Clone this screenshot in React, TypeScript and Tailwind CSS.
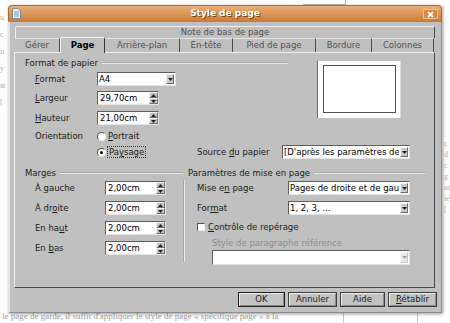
import type { ReactNode } from 'react'

const TABS = [
  { label: 'Gérer', w: 'w-[45px]' },
  { label: 'Page', w: 'w-[45px]', active: true },
  { label: 'Arrière-plan', w: 'w-[75px]' },
  { label: 'En-tête', w: 'w-[53px]' },
  { label: 'Pied de page', w: 'w-[83px]' },
  { label: 'Bordure', w: 'w-[56px]' },
  { label: 'Colonnes', w: 'w-[62px]' },
]

function Arrow({ up }: { up?: boolean }) {
  return (
    <svg width="5" height="3" viewBox="0 0 5 3" className="block">
      <path d={up ? 'M0 3 L2.5 0 L5 3 Z' : 'M0 0 L5 0 L2.5 3 Z'} fill="#222" />
    </svg>
  )
}

function Heading({ children, className = '' }: { children: ReactNode; className?: string }) {
  return (
    <div className={`flex h-[14px] items-center ${className}`}>
      <span className="whitespace-nowrap text-[8.5px] text-[#1c1c1c]">{children}</span>
      <div className="ml-[4px] h-[2px] flex-1 border-t border-t-[#a9a9a9] border-b border-b-[#ececec]" />
    </div>
  )
}

function Combo({ value, className = '', disabled }: { value: string; className?: string; disabled?: boolean }) {
  return (
    <div className={`flex border border-t-[#5e5e5e] border-l-[#5e5e5e] border-r-[#e4e4e4] border-b-[#e4e4e4] bg-white ${className}`}>
      <div className="flex flex-1 items-center overflow-hidden whitespace-nowrap pl-[1px] text-[8.5px] text-black">{value}</div>
      <div className={`m-[1px] flex w-[8px] items-center justify-center border border-t-[#f4f4f4] border-l-[#f4f4f4] border-r-[#6a6a6a] border-b-[#6a6a6a] bg-[#cacaca] ${disabled ? 'opacity-40' : ''}`}>
        <Arrow />
      </div>
    </div>
  )
}

function Spin({ value, className = '' }: { value: string; className?: string }) {
  return (
    <div className={`flex h-[14px] border border-t-[#5e5e5e] border-l-[#5e5e5e] border-r-[#e4e4e4] border-b-[#e4e4e4] bg-white ${className}`}>
      <div className="flex flex-1 items-center pl-[2px] text-[8.5px] text-black">{value}</div>
      <div className="flex w-[9px] flex-col bg-[#c6c6c6]">
        <div className="flex flex-1 items-center justify-center border border-t-[#f4f4f4] border-l-[#f4f4f4] border-r-[#707070] border-b-[#707070]">
          <Arrow up />
        </div>
        <div className="flex flex-1 items-center justify-center border border-t-[#f4f4f4] border-l-[#f4f4f4] border-r-[#707070] border-b-[#707070]">
          <Arrow />
        </div>
      </div>
    </div>
  )
}

function Radio({ checked }: { checked?: boolean }) {
  return (
    <div className="flex h-[9px] w-[9px] items-center justify-center rounded-full border border-t-[#555] border-l-[#555] border-r-[#eee] border-b-[#eee] bg-white">
      {checked && <div className="h-[3px] w-[3px] rounded-full bg-black" />}
    </div>
  )
}

// children wrapped in one span so spaces around <U> survive the flex box
function Label({ children, className = '' }: { children: ReactNode; className?: string }) {
  return (
    <div className={`flex items-center whitespace-nowrap text-[8.5px] text-[#1c1c1c] ${className}`}>
      <span>{children}</span>
    </div>
  )
}

function U({ children }: { children: ReactNode }) {
  return <span className="underline underline-offset-[1px]">{children}</span>
}

function Button({ children, className = '', primary }: { children: ReactNode; className?: string; primary?: boolean }) {
  return (
    <div className={`flex h-[15px] items-center justify-center border ${primary ? 'border-[#1e1e1e]' : 'border-[#3c3c3c]'} bg-[#c3c3c3] text-[8.5px] text-[#1c1c1c] ${className}`}>
      <div className="flex h-full w-full items-center justify-center border border-t-[#ececec] border-l-[#ececec] border-r-[#8a8a8a] border-b-[#8a8a8a]">
        <span>{children}</span>
      </div>
    </div>
  )
}

function BackgroundDoc() {
  return (
    <>
      <div className="absolute left-[303px] top-[4px] h-px w-[42px] bg-[#b8b8b8]" />
      <div className="absolute left-[345px] top-0 h-[5px] w-px bg-[#b8b8b8]" />
      <div className="absolute left-0 top-[14px] flex flex-col gap-[9px] font-['Liberation_Serif',serif] text-[8px] leading-none text-[#a8a8a8]">
        <span>u</span>
        <span>c</span>
        <span>ıı</span>
        <span>y</span>
        <span>st</span>
        <span>[</span>
      </div>
      <div className="absolute left-[444px] top-[140px] flex flex-col gap-[3px] font-['Liberation_Serif',serif] text-[8px] leading-none text-[#b0b0b0]">
        <span>c</span>
        <span>d</span>
        <span>c</span>
        <span>g</span>
        <span>ac</span>
        <span>ié</span>
        <span>[</span>
      </div>
      <div className="absolute left-[343px] top-[313px] h-[10px] w-px bg-[#c8c8c8]" />
      <div className="absolute left-[417px] top-[313px] h-[10px] w-px bg-[#c8c8c8]" />
      <div className="absolute left-[2px] top-[311px] whitespace-nowrap font-['Liberation_Serif',serif] text-[9px] leading-[11px] text-[#a0a0a0]">
        le page de garde, il suffit d'appliquer le style de page « spécifique page » à la
      </div>
    </>
  )
}

export default function App() {
  return (
    <div className="relative h-[323px] w-[450px] overflow-hidden bg-white font-['DejaVu_Sans',sans-serif]">
      <BackgroundDoc />

      {/* dialog window */}
      <div className="absolute left-[8px] top-[5px] flex h-[308px] w-[434px] flex-col shadow-[1px_1px_3px_rgba(0,0,0,0.4)]">
        {/* title bar */}
        <div className="relative flex h-[17px] items-center justify-center rounded-t-[4px] border border-b-0 border-[#b06c30] bg-linear-to-b from-[#eab077] to-[#c97a35]">
          <svg width="9" height="11" viewBox="0 0 9 11" className="absolute left-[3px] top-[2px]">
            <path d="M0.5 0.5 H6 L8.5 3 V10.5 H0.5 Z" fill="#e8eef2" stroke="#7b8a96" />
            <path d="M2 4 H7 M2 6 H7 M2 8 H7" stroke="#8a98a4" strokeWidth="1" />
          </svg>
          <span className="text-[9px] font-bold text-white [text-shadow:1px_1px_0_#7a4418]">Style de page</span>
          <div className="absolute right-[3px] top-[3px] flex h-[10px] w-[15px] items-center justify-center border border-[#f1c190] bg-[#d48848]">
            <svg width="7" height="7" viewBox="0 0 7 7">
              <path d="M1 1 L6 6 M6 1 L1 6" stroke="white" strokeWidth="1.8" />
            </svg>
          </div>
        </div>

        {/* body */}
        <div className="flex flex-1 flex-col border-l-2 border-l-[#e6e4e2] border-r border-r-[#8c8c8c] border-b border-b-[#8c8c8c] bg-[#c0c0c0] pl-[4px] pr-[6px] pt-[4px]">
          {/* tabs, first row */}
          <div className="ml-[1px] flex h-[12px] items-center justify-center rounded-t-[2px] border-t border-l border-t-[#ededed] border-l-[#ededed] border-r border-r-[#4a4a4a] text-[8.5px] text-[#505050]">
            Note de bas de page
          </div>
          {/* tabs, second row */}
          <div className="relative z-10 ml-[1px] flex h-[14px]">
            {TABS.map(t =>
              t.active ? (
                <div
                  key={t.label}
                  className={`${t.w} -mt-[1px] flex h-[16px] items-center justify-center rounded-t-[2px] border-t border-l border-t-[#f4f4f4] border-l-[#f4f4f4] border-r border-r-[#3a3a3a] bg-[#c0c0c0] text-[8.5px] font-bold text-black`}
                >
                  {t.label}
                </div>
              ) : (
                <div
                  key={t.label}
                  className={`${t.w} flex h-[14px] items-center justify-center border-t border-t-[#e6e6e6] border-r border-r-[#4a4a4a] text-[8.5px] text-[#505050]`}
                >
                  {t.label}
                </div>
              ),
            )}
          </div>

          {/* page panel */}
          <div className="flex h-[236px] flex-col border border-t-[#f0f0f0] border-l-[#f0f0f0] border-r-[#4a4a4a] border-b-[#4a4a4a] pl-[10px] pt-[3px]">
            {/* paper format */}
            <div className="flex">
              <div className="flex w-[263px] flex-col">
                <Heading>Format de papier</Heading>
                <div className="flex flex-col pl-[10px]">
                  <div className="mt-[2px] flex h-[14px]">
                    <Label className="w-[62px]"><U>F</U>ormat</Label>
                    <Combo value="A4" className="w-[79px]" />
                  </div>
                  <div className="mt-[5px] flex h-[14px]">
                    <Label className="w-[62px]"><U>L</U>argeur</Label>
                    <Spin value="29,70cm" className="w-[62px]" />
                  </div>
                  <div className="mt-[6px] flex h-[14px]">
                    <Label className="w-[62px]"><U>H</U>auteur</Label>
                    <Spin value="21,00cm" className="w-[62px]" />
                  </div>
                  <div className="mt-[4px] flex h-[14px] items-center">
                    <Label className="w-[62px]">Orientation</Label>
                    <Radio />
                    <Label className="ml-[2px]"><U>P</U>ortrait</Label>
                  </div>
                </div>
              </div>
              {/* preview */}
              <div className="ml-[29px] mt-[5px] h-[57px] w-[84px] border-l border-l-[#6a6a6a] border-r border-r-[#dcdcdc] bg-white pl-[5px] pt-[4px]">
                <div className="h-[48px] w-[73px] border border-[#505050]" />
              </div>
            </div>

            <div className="mt-[2px] flex h-[14px] items-center">
              <div className="ml-[72px] flex w-[100px] items-center">
                <Radio checked />
                <Label className="ml-[1px] border border-dotted border-[#333] px-[1px] leading-[10px]">Pa<U>y</U>sage</Label>
              </div>
              <Label className="w-[85px]">Source <U>d</U>u papier</Label>
              <Combo value="[D'après les paramètres de" className="h-[14px] w-[128px]" />
            </div>

            {/* margins + layout settings */}
            <div className="mt-[7px] flex">
              <div className="flex w-[158px] flex-col">
                <Heading>Marges</Heading>
                <div className="mt-[1px] flex flex-col gap-[6px] pl-[10px]">
                  {[
                    { k: 'g', label: <>À <U>g</U>auche</> },
                    { k: 'd', label: <>À dr<U>o</U>ite</> },
                    { k: 'h', label: <>En ha<U>u</U>t</> },
                    { k: 'b', label: <>En <U>b</U>as</> },
                  ].map(({ k, label }) => (
                    <div key={k} className="flex h-[14px]">
                      <Label className="w-[70px]">{label}</Label>
                      <Spin value="2,00cm" className="w-[61px]" />
                    </div>
                  ))}
                </div>
              </div>
              <div className="mt-[14px] h-[82px] w-[2px] border-l border-l-[#a4a4a4] border-r border-r-[#e8e8e8]" />
              <div className="ml-[3px] flex w-[237px] flex-col">
                <Heading>Paramètres de mise en page</Heading>
                <div className="flex flex-col pl-[9px]">
                  <div className="mt-[1px] flex h-[14px]">
                    <Label className="w-[91px]">Mise e<U>n</U> page</Label>
                    <Combo value="Pages de droite et de gau" className="w-[122px]" />
                  </div>
                  <div className="mt-[6px] flex h-[14px]">
                    <Label className="w-[91px]">For<U>m</U>at</Label>
                    <Combo value="1, 2, 3, ..." className="w-[122px]" />
                  </div>
                  <div className="mt-[5px] flex h-[14px] items-center">
                    <div className="h-[8px] w-[8px] border border-t-[#555] border-l-[#555] border-r-[#eee] border-b-[#eee] bg-white" />
                    <Label className="ml-[3px]"><U>C</U>ontrôle de repérage</Label>
                  </div>
                  <Label className="mt-[3px] h-[12px] pl-[15px] text-[#8c8c8c]">Style de paragraphe référence</Label>
                  <Combo value="" disabled className="ml-[15px] mt-[1px] h-[15px] w-[198px]" />
                </div>
              </div>
            </div>
          </div>

          {/* buttons */}
          <div className="-mr-[2px] mt-[4px] flex justify-end gap-[3px]">
            <Button primary className="w-[47px]">OK</Button>
            <Button className="w-[49px]">Annuler</Button>
            <Button className="w-[45px]">Aide</Button>
            <Button className="w-[49px]"><U>R</U>établir</Button>
          </div>
        </div>
      </div>
    </div>
  )
}
